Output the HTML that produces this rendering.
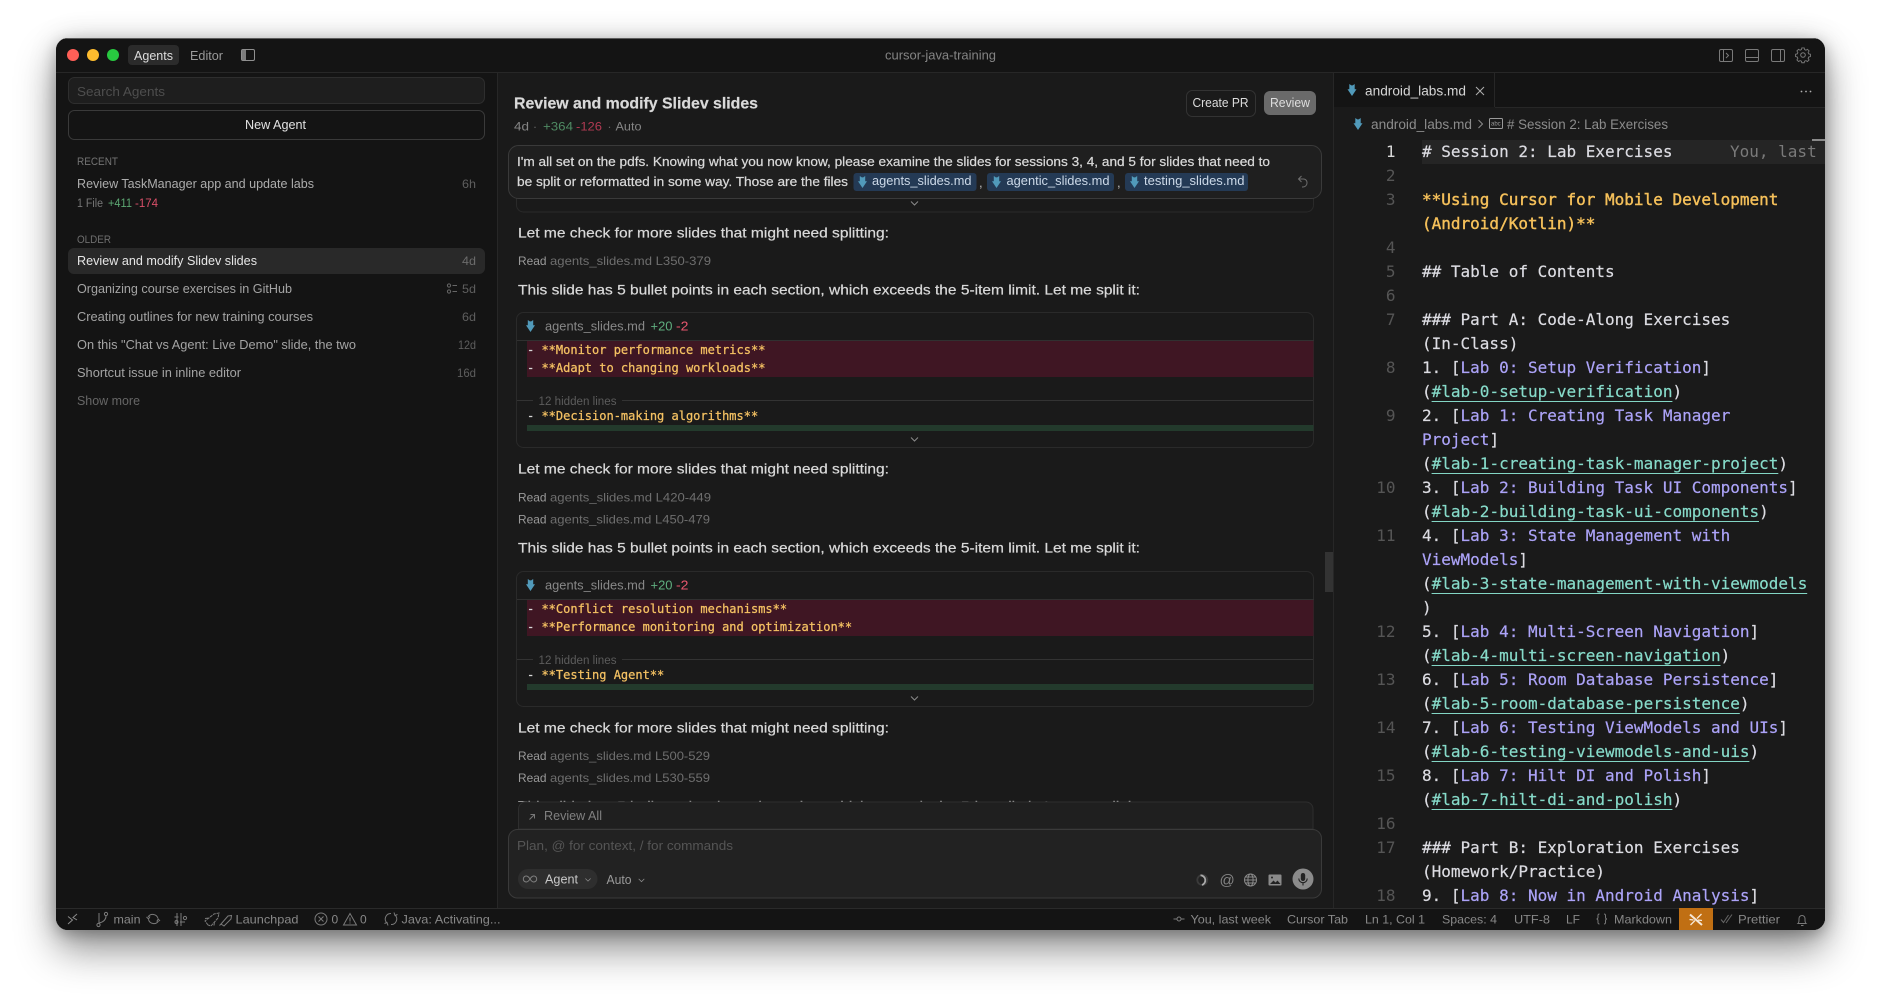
<!DOCTYPE html>
<html lang="en"><head><meta charset="utf-8"><title>cursor-java-training</title>
<style>
html,body{margin:0;padding:0;background:#fff;width:1881px;height:1004px;overflow:hidden}
#win{position:absolute;left:56px;top:38px;width:1769px;height:892px;border-radius:12px;background:#141414;box-shadow:0 20px 40px rgba(0,0,0,.42),0 4px 14px rgba(0,0,0,.22),0 0 30px rgba(0,0,0,.12)}
svg{position:absolute;left:0;top:0;filter:blur(.3px)}
text{font-family:"Liberation Sans",sans-serif;font-size:13px;white-space:pre}
.m{font-family:"DejaVu Sans Mono",monospace;font-size:12px;fill:#f5c263;stroke:#f5c263;stroke-width:.25}
.d{fill:#d8d8d8;stroke:#d8d8d8}
.c{font-family:"DejaVu Sans Mono",monospace;font-size:16px;fill:#dcdce2;stroke:#dcdce2;stroke-width:.2}
.n{font-family:"DejaVu Sans Mono",monospace;font-size:16px;fill:#555;text-anchor:end}
.y{fill:#f5c05a;stroke:#f5c05a;stroke-width:.4}.p{fill:#aca3f8;stroke:#aca3f8}.t{fill:#86dac9;stroke:#86dac9}
.s{font-size:12px;fill:#888}
.h{stroke:#d9d9d9;stroke-width:.22}
.i{fill:none;stroke:#7a7a7a;stroke-width:1}
</style></head><body>
<div id="win"></div>
<svg width="1881" height="1004" viewBox="0 0 1881 1004" xmlns="http://www.w3.org/2000/svg">
<defs>
<clipPath id="w"><rect x="56" y="38" width="1769" height="892" rx="12"/></clipPath>
<clipPath id="chat"><rect x="497" y="72" width="836" height="730"/></clipPath>
<symbol id="md" viewBox="0 0 9 12" overflow="visible"><path d="M1.8 0l2 1.4h1.4L7.2 0v5.2H9L4.5 12 0 5.2h1.8z" fill="#519aba"/></symbol>
<symbol id="chev" viewBox="0 0 8 5" overflow="visible"><path d="M.5.5L4 4 7.5.5" fill="none" stroke="#8a8a8a" stroke-width="1"/></symbol>
</defs>
<g clip-path="url(#w)">
<!-- base panels -->
<rect x="56" y="38" width="1769" height="892" fill="#141414"/>
<rect x="56" y="38" width="1769" height="1" fill="#5c5c5c"/>
<rect x="497" y="73" width="836" height="835" fill="#1a1a1a"/>
<rect x="1333" y="107" width="492" height="801" fill="#1a1a1a"/>
<rect x="56" y="72" width="1769" height="1" fill="#272727"/>
<rect x="497" y="72" width="1" height="836" fill="#272727"/>
<rect x="1333" y="72" width="1" height="836" fill="#272727"/>
<rect x="1495" y="107" width="330" height="1" fill="#272727"/>
<rect x="1494" y="73" width="1" height="34" fill="#272727"/>
<rect x="56" y="908" width="1769" height="1" fill="#2a2a2a"/>

<!-- title bar -->
<circle cx="73" cy="55" r="6" fill="#ff5f57"/><circle cx="93" cy="55" r="6" fill="#febc2e"/><circle cx="113" cy="55" r="6" fill="#28c840"/>
<rect x="128" y="45" width="51" height="20" rx="4" fill="#2b2b2b"/>
<text x="134" y="60" textLength="39" lengthAdjust="spacingAndGlyphs" fill="#dcdcdc">Agents</text>
<text x="190" y="60" textLength="33" lengthAdjust="spacingAndGlyphs" fill="#9a9a9a">Editor</text>
<rect x="241.5" y="49.5" width="13" height="11" rx="1.5" fill="none" stroke="#909090"/><rect x="242" y="50" width="4" height="10" fill="#7c7c7c"/>
<text x="885" y="59.5" textLength="111" lengthAdjust="spacingAndGlyphs" fill="#848484">cursor-java-training</text>
<g class="i">
<rect x="1719.5" y="49.5" width="13" height="12" rx="1.5"/><path d="M1723.5 50v11M1726 53l2.5 2.5-2.5 2.5"/>
<rect x="1745.5" y="49.5" width="13" height="12" rx="1.5"/><path d="M1746 57.5h12"/>
<rect x="1771.5" y="49.5" width="13" height="12" rx="1.5"/><path d="M1780.5 50v11"/>
<circle cx="1803" cy="55" r="2.3"/><path d="M1801.7 48.7h2.6l.4 1.8 1.5.7 1.6-1 1.8 1.8-1 1.6.6 1.5 1.9.5v2.5l-1.9.5-.6 1.5 1 1.6-1.8 1.8-1.6-1-1.5.6-.4 1.7h-2.6l-.4-1.7-1.5-.6-1.6 1-1.8-1.8 1-1.6-.6-1.5-1.9-.5v-2.5l1.9-.5.6-1.5-1-1.6 1.8-1.8 1.6 1 1.5-.7z" transform="translate(1803 55) scale(.92) translate(-1803 -56.4)"/>
</g>

<!-- sidebar -->
<rect x="68.5" y="77.5" width="416" height="26" rx="6" fill="#1e1e1e" stroke="#2e2e2e"/>
<text x="77" y="96" textLength="88" lengthAdjust="spacingAndGlyphs" fill="#4e4e4e">Search Agents</text>
<rect x="68.5" y="110.5" width="416" height="29" rx="6" fill="#141414" stroke="#3a3a3a"/>
<text x="245" y="129" textLength="61" lengthAdjust="spacingAndGlyphs" fill="#e2e2e2">New Agent</text>
<text x="77" y="165" textLength="41" lengthAdjust="spacingAndGlyphs" style="font-size:11px" fill="#737373">RECENT</text>
<text x="77" y="188" textLength="237" lengthAdjust="spacingAndGlyphs" fill="#adadad">Review TaskManager app and update labs</text>
<text x="462" y="188" textLength="14" lengthAdjust="spacingAndGlyphs" style="font-size:12px" fill="#5e5e5e">6h</text>
<text x="77" y="207" textLength="26" lengthAdjust="spacingAndGlyphs" style="font-size:11.5px" fill="#777">1 File</text>
<text x="108" y="207" textLength="24" lengthAdjust="spacingAndGlyphs" style="font-size:11.5px" fill="#5da873">+411</text>
<text x="135" y="207" textLength="23" lengthAdjust="spacingAndGlyphs" style="font-size:11.5px" fill="#d94f68">-174</text>
<text x="77" y="243" textLength="34" lengthAdjust="spacingAndGlyphs" style="font-size:11px" fill="#6e6e6e">OLDER</text>
<rect x="68" y="248" width="417" height="26" rx="6" fill="#292929"/>
<text x="77" y="265" textLength="180" lengthAdjust="spacingAndGlyphs" fill="#e6e6e6">Review and modify Slidev slides</text>
<text x="462" y="265" textLength="14" lengthAdjust="spacingAndGlyphs" style="font-size:12px" fill="#6c6c6c">4d</text>
<text x="77" y="293" textLength="215" lengthAdjust="spacingAndGlyphs" fill="#a4a4a4">Organizing course exercises in GitHub</text>
<circle cx="449" cy="285.5" r="1.6" class="i" style="stroke:#666"/><circle cx="449" cy="291.5" r="1.6" class="i" style="stroke:#666"/><path d="M452.5 285.5h4.5M452.5 291.5h4.5" class="i" style="stroke:#666"/>
<text x="462" y="293" textLength="14" lengthAdjust="spacingAndGlyphs" style="font-size:12px" fill="#5e5e5e">5d</text>
<text x="77" y="321" textLength="236" lengthAdjust="spacingAndGlyphs" fill="#a4a4a4">Creating outlines for new training courses</text>
<text x="462" y="321" textLength="14" lengthAdjust="spacingAndGlyphs" style="font-size:12px" fill="#5e5e5e">6d</text>
<text x="77" y="349" textLength="279" lengthAdjust="spacingAndGlyphs" fill="#a4a4a4">On this "Chat vs Agent: Live Demo" slide, the two</text>
<text x="458" y="349" textLength="18" lengthAdjust="spacingAndGlyphs" style="font-size:12px" fill="#5e5e5e">12d</text>
<text x="77" y="377" textLength="164" lengthAdjust="spacingAndGlyphs" fill="#a4a4a4">Shortcut issue in inline editor</text>
<text x="457" y="377" textLength="19" lengthAdjust="spacingAndGlyphs" style="font-size:12px" fill="#5e5e5e">16d</text>
<text x="77" y="405" textLength="63" lengthAdjust="spacingAndGlyphs" fill="#666">Show more</text>

<!-- chat body -->
<g clip-path="url(#chat)">
<rect x="516.5" y="190" width="797" height="22" rx="7" fill="#1a1a1a" stroke="#2a2a2a"/>
<use href="#chev" x="910.5" y="201" width="8" height="5"/>
<text class="h" x="518" y="237.700" textLength="371" lengthAdjust="spacingAndGlyphs" style="font-size:14px" fill="#d9d9d9">Let me check for more slides that might need splitting:</text>
<text x="518" y="265.200" textLength="28.5" lengthAdjust="spacingAndGlyphs" style="font-size:12px" fill="#9a9a9a">Read</text>
<text x="550" y="265.200" textLength="161" lengthAdjust="spacingAndGlyphs" style="font-size:12px" fill="#6e6e6e">agents_slides.md L350-379</text>
<text class="h" x="518" y="294.600" textLength="622" lengthAdjust="spacingAndGlyphs" style="font-size:14px" fill="#d9d9d9">This slide has 5 bullet points in each section, which exceeds the 5-item limit. Let me split it:</text>

<!-- diff card 1 -->
<g id="card1">
<rect x="516.5" y="312.5" width="797" height="135" rx="7" fill="#1a1a1a" stroke="#2a2a2a"/>
<rect x="517" y="340" width="797" height="1" fill="#303030"/>
<use href="#md" x="526" y="320" width="9" height="12"/>
<text x="545" y="330.5" textLength="100" lengthAdjust="spacingAndGlyphs" style="font-size:12.5px" fill="#888">agents_slides.md</text>
<text x="650.5" y="330.5" textLength="22" lengthAdjust="spacingAndGlyphs" style="font-size:12.5px" fill="#5fae7f">+20</text>
<text x="676" y="330.5" textLength="12.5" lengthAdjust="spacingAndGlyphs" style="font-size:12.5px" fill="#e8576f">-2</text>
<rect x="527" y="341" width="786.5" height="36" fill="#3f1623"/>
<text class="m" x="527" y="354"><tspan class="d">- </tspan>**Monitor performance metrics**</text>
<text class="m" x="527" y="372"><tspan class="d">- </tspan>**Adapt to changing workloads**</text>
<path d="M517 400.5h16M622 400.5h691" stroke="#333"/>
<text x="538.5" y="405" textLength="78" lengthAdjust="spacingAndGlyphs" style="font-size:11.5px" fill="#5c5c5c">12 hidden lines</text>
<text class="m" x="527" y="420"><tspan class="d">- </tspan>**Decision-making algorithms**</text>
<rect x="527" y="425" width="786.5" height="6" fill="#233a2c"/>
<use href="#chev" x="910.5" y="437" width="8" height="5"/>
</g>

<text class="h" x="518" y="473.700" textLength="371" lengthAdjust="spacingAndGlyphs" style="font-size:14px" fill="#d9d9d9">Let me check for more slides that might need splitting:</text>
<text x="518" y="501.700" textLength="28.5" lengthAdjust="spacingAndGlyphs" style="font-size:12px" fill="#9a9a9a">Read</text>
<text x="550" y="501.700" textLength="161" lengthAdjust="spacingAndGlyphs" style="font-size:12px" fill="#6e6e6e">agents_slides.md L420-449</text>
<text x="518" y="523.700" textLength="28.5" lengthAdjust="spacingAndGlyphs" style="font-size:12px" fill="#9a9a9a">Read</text>
<text x="550" y="523.700" textLength="160" lengthAdjust="spacingAndGlyphs" style="font-size:12px" fill="#6e6e6e">agents_slides.md L450-479</text>
<text class="h" x="518" y="552.600" textLength="622" lengthAdjust="spacingAndGlyphs" style="font-size:14px" fill="#d9d9d9">This slide has 5 bullet points in each section, which exceeds the 5-item limit. Let me split it:</text>

<!-- diff card 2 -->
<g transform="translate(0 259)">
<rect x="516.5" y="312.5" width="797" height="135" rx="7" fill="#1a1a1a" stroke="#2a2a2a"/>
<rect x="517" y="340" width="797" height="1" fill="#303030"/>
<use href="#md" x="526" y="320" width="9" height="12"/>
<text x="545" y="330.5" textLength="100" lengthAdjust="spacingAndGlyphs" style="font-size:12.5px" fill="#888">agents_slides.md</text>
<text x="650.5" y="330.5" textLength="22" lengthAdjust="spacingAndGlyphs" style="font-size:12.5px" fill="#5fae7f">+20</text>
<text x="676" y="330.5" textLength="12.5" lengthAdjust="spacingAndGlyphs" style="font-size:12.5px" fill="#e8576f">-2</text>
<rect x="527" y="341" width="786.5" height="36" fill="#3f1623"/>
<text class="m" x="527" y="354"><tspan class="d">- </tspan>**Conflict resolution mechanisms**</text>
<text class="m" x="527" y="372"><tspan class="d">- </tspan>**Performance monitoring and optimization**</text>
<path d="M517 400.5h16M622 400.5h691" stroke="#333"/>
<text x="538.5" y="405" textLength="78" lengthAdjust="spacingAndGlyphs" style="font-size:11.5px" fill="#5c5c5c">12 hidden lines</text>
<text class="m" x="527" y="420"><tspan class="d">- </tspan>**Testing Agent**</text>
<rect x="527" y="425" width="786.5" height="6" fill="#233a2c"/>
<use href="#chev" x="910.5" y="437" width="8" height="5"/>
</g>

<text class="h" x="518" y="732.700" textLength="371" lengthAdjust="spacingAndGlyphs" style="font-size:14px" fill="#d9d9d9">Let me check for more slides that might need splitting:</text>
<text x="518" y="760.200" textLength="28.5" lengthAdjust="spacingAndGlyphs" style="font-size:12px" fill="#9a9a9a">Read</text>
<text x="550" y="760.200" textLength="160" lengthAdjust="spacingAndGlyphs" style="font-size:12px" fill="#6e6e6e">agents_slides.md L500-529</text>
<text x="518" y="782.200" textLength="28.5" lengthAdjust="spacingAndGlyphs" style="font-size:12px" fill="#9a9a9a">Read</text>
<text x="550" y="782.200" textLength="160" lengthAdjust="spacingAndGlyphs" style="font-size:12px" fill="#6e6e6e">agents_slides.md L530-559</text>
<text class="h" x="518" y="811" textLength="622" lengthAdjust="spacingAndGlyphs" style="font-size:14px" fill="#d9d9d9">This slide has 5 bullet points in each section, which exceeds the 5-item limit. Let me split it:</text>
</g>

<!-- chat header over scroll -->
<rect x="498" y="73" width="835" height="72" fill="#1a1a1a"/>
<text class="h" x="514" y="108.5" textLength="244" lengthAdjust="spacingAndGlyphs" style="font-size:16px;font-weight:700" fill="#d9d9d9">Review and modify Slidev slides</text>
<text x="514" y="130.500" textLength="15" lengthAdjust="spacingAndGlyphs" style="font-size:12px" fill="#858585">4d</text>
<text x="533" y="130.500" style="font-size:12px" fill="#666">·</text>
<text x="543" y="130.500" textLength="30" lengthAdjust="spacingAndGlyphs" style="font-size:12px" fill="#4f8a63">+364</text>
<text x="576" y="130.500" textLength="26" lengthAdjust="spacingAndGlyphs" style="font-size:12px" fill="#b03a52">-126</text>
<text x="607.5" y="130.500" style="font-size:12px" fill="#666">·</text>
<text x="615.5" y="130.500" textLength="26" lengthAdjust="spacingAndGlyphs" style="font-size:12px" fill="#858585">Auto</text>
<rect x="1186.5" y="90.5" width="69" height="26" rx="6" fill="#1a1a1a" stroke="#333"/>
<text x="1192.5" y="107.200" textLength="56" lengthAdjust="spacingAndGlyphs" style="font-size:12.5px" fill="#dcdcdc">Create PR</text>
<rect x="1264" y="91" width="52" height="24" rx="6" fill="#6a6a6a"/>
<text x="1270" y="107.200" textLength="40" lengthAdjust="spacingAndGlyphs" style="font-size:12.5px" fill="#dedede">Review</text>

<!-- user message -->
<rect x="508.5" y="145.5" width="813" height="53" rx="10" fill="#1f1f1f" stroke="#3a3a3a"/>
<text class="h" x="517" y="166.2" textLength="753" lengthAdjust="spacingAndGlyphs" fill="#d9d9d9">I'm all set on the pdfs. Knowing what you now know, please examine the slides for sessions 3, 4, and 5 for slides that need to</text>
<text class="h" x="517" y="186" textLength="331" lengthAdjust="spacingAndGlyphs" fill="#d9d9d9">be split or reformatted in some way. Those are the files</text>
<rect x="853.5" y="173" width="123" height="18" rx="3" fill="#243a55"/>
<use href="#md" x="858" y="176" width="9" height="12"/>
<text x="872" y="185.2" textLength="99.5" lengthAdjust="spacingAndGlyphs" style="font-size:12.5px" fill="#ccd9e8">agents_slides.md</text>
<text x="979" y="187" fill="#bbb">,</text>
<rect x="987" y="173" width="127" height="18" rx="3" fill="#243a55"/>
<use href="#md" x="992" y="176" width="9" height="12"/>
<text x="1006.5" y="185.2" textLength="103" lengthAdjust="spacingAndGlyphs" style="font-size:12.5px" fill="#ccd9e8">agentic_slides.md</text>
<text x="1117" y="187" fill="#bbb">,</text>
<rect x="1125" y="173" width="123" height="18" rx="3" fill="#243a55"/>
<use href="#md" x="1130" y="176" width="9" height="12"/>
<text x="1144" y="185.2" textLength="100.5" lengthAdjust="spacingAndGlyphs" style="font-size:12.5px" fill="#ccd9e8">testing_slides.md</text>
<path d="M1301.5 176l-3 3 3 3M1298.5 179h5a3.500 3.500 0 0 1 3.500 3.500v.5a4 4 0 0 1-4 4h-1" fill="none" stroke="#6e6e6e"/>

<!-- scrollbar -->
<rect x="1325" y="552" width="8" height="40" fill="#333"/>

<!-- review all + input -->
<path d="M518.5 829V809a7 7 0 0 1 7-7H1306a7 7 0 0 1 7 7V829z" fill="#1f1f1f" stroke="#2e2e2e"/>
<path d="M529.5 819.5l5-5M530.5 814.5h4v4" fill="none" stroke="#777"/>
<text x="544" y="820" textLength="58" lengthAdjust="spacingAndGlyphs" style="font-size:12.5px" fill="#808080">Review All</text>
<rect x="508.5" y="829.5" width="813" height="68.5" rx="9" fill="#222" stroke="#3a3a3a"/>
<text x="517" y="850" textLength="216" lengthAdjust="spacingAndGlyphs" style="font-size:12.5px" fill="#555">Plan, @ for context, / for commands</text>
<rect x="518" y="869" width="79.5" height="20" rx="10" fill="#2e2e2e"/>
<path d="M530 879c-1.4-2.2-2.4-3-3.7-3a3 3 0 0 0 0 6c1.3 0 2.3-.8 3.7-3zm0 0c1.4-2.2 2.4-3 3.7-3a3 3 0 0 1 0 6c-1.3 0-2.3-.8-3.7-3z" fill="none" stroke="#808080"/>
<text x="545" y="883.5" textLength="33" lengthAdjust="spacingAndGlyphs" fill="#c8c8c8">Agent</text>
<use href="#chev" x="585" y="878" width="6" height="4"/>
<text x="606.5" y="884" textLength="25" lengthAdjust="spacingAndGlyphs" fill="#9a9a9a">Auto</text>
<use href="#chev" x="638" y="878.5" width="7" height="4"/>
<circle cx="1202.300" cy="880" r="5" fill="none" stroke="#3a3a3a" stroke-width="1.8"/>
<path d="M1200.500 875.300a5 5 0 0 1 1.500 9.700" fill="none" stroke="#aaa" stroke-width="1.8"/>
<text x="1219.500" y="885" style="font-size:15px" fill="#858585">@</text>
<g class="i" style="stroke:#8a8a8a"><circle cx="1250.5" cy="880" r="6"/><ellipse cx="1250.5" cy="880" rx="2.6" ry="6"/><path d="M1244.5 880h12M1245.5 877h10M1245.5 883h10"/></g>
<rect x="1268.5" y="874.5" width="13" height="11" rx="1" fill="#8a8a8a"/><path d="M1270 884l3.5-3.5 2 2 2-2 3 3.5z" fill="#222"/><circle cx="1272" cy="877.5" r="1" fill="#222"/>
<ellipse cx="1303" cy="879" rx="10.5" ry="10.5" fill="#8b8b8b"/>
<rect x="1300.8" y="873" width="4.4" height="8" rx="2.2" fill="#222"/><path d="M1298.8 878.5a4.2 4.2 0 0 0 8.4 0M1303 882.8v2.7" fill="none" stroke="#222" stroke-width="1.1"/>

<!-- editor tabs -->
<use href="#md" x="1347.5" y="84" width="9" height="12"/>
<text x="1365" y="95.5" textLength="101" lengthAdjust="spacingAndGlyphs" style="font-size:13.5px" fill="#d6d6d6">android_labs.md</text>
<path d="M1476 87l8 8M1484 87l-8 8" stroke="#b0b0b0" fill="none"/>
<circle cx="1801.5" cy="91.5" r=".9" fill="#b0b0b0"/><circle cx="1806" cy="91.5" r=".9" fill="#b0b0b0"/><circle cx="1810.5" cy="91.5" r=".9" fill="#b0b0b0"/>
<use href="#md" x="1353.5" y="118" width="9" height="12"/>
<text x="1371" y="129" textLength="101" lengthAdjust="spacingAndGlyphs" style="font-size:13.5px" fill="#8c8c8c">android_labs.md</text>
<path d="M1478.5 120l4 4-4 4" fill="none" stroke="#8c8c8c"/>
<rect x="1489.5" y="118.5" width="13" height="10" rx="1" fill="none" stroke="#9a9a9a"/>
<text x="1491" y="125.5" style="font-size:6px" fill="#9a9a9a">abc</text>
<text x="1507" y="129" textLength="161" lengthAdjust="spacingAndGlyphs" style="font-size:13.5px" fill="#8c8c8c"># Session 2: Lab Exercises</text>

<!-- editor -->
<rect x="1422" y="140" width="403" height="24" fill="#252525"/>
<rect x="1812" y="139" width="13" height="2" fill="#8a8a8a"/>
<text class="n" x="1395.5" y="157" style="fill:#d8d8d8">1</text>
<text class="c" x="1422" y="157"># Session 2: Lab Exercises</text>
<text class="c" x="1730" y="157" style="fill:#7a7a7a;stroke:none">You, last</text>
<text class="n" x="1395.5" y="181">2</text>
<text class="n" x="1395.5" y="205">3</text>
<text class="c y" x="1422" y="205">**Using Cursor for Mobile Development</text>
<text class="c y" x="1422" y="229">(Android/Kotlin)**</text>
<text class="n" x="1395.5" y="253">4</text>
<text class="n" x="1395.5" y="277">5</text>
<text class="c" x="1422" y="277">## Table of Contents</text>
<text class="n" x="1395.5" y="301">6</text>
<text class="n" x="1395.5" y="325">7</text>
<text class="c" x="1422" y="325">### Part A: Code-Along Exercises</text>
<text class="c" x="1422" y="349">(In-Class)</text>
<text class="n" x="1395.5" y="373">8</text>
<text class="c" x="1422" y="373">1. [<tspan class="p">Lab 0: Setup Verification</tspan>]</text>
<text class="c" x="1422" y="397">(<tspan class="t">#lab-0-setup-verification</tspan>)</text>
<rect x="1431.6" y="401" width="240.8" height="1" fill="#83d6c5"/>
<text class="n" x="1395.5" y="421">9</text>
<text class="c" x="1422" y="421">2. [<tspan class="p">Lab 1: Creating Task Manager</tspan></text>
<text class="c" x="1422" y="445"><tspan class="p">Project</tspan>]</text>
<text class="c" x="1422" y="469">(<tspan class="t">#lab-1-creating-task-manager-project</tspan>)</text>
<rect x="1431.6" y="473" width="346.7" height="1" fill="#83d6c5"/>
<text class="n" x="1395.5" y="493">10</text>
<text class="c" x="1422" y="493">3. [<tspan class="p">Lab 2: Building Task UI Components</tspan>]</text>
<text class="c" x="1422" y="517">(<tspan class="t">#lab-2-building-task-ui-components</tspan>)</text>
<rect x="1431.6" y="521" width="327.4" height="1" fill="#83d6c5"/>
<text class="n" x="1395.5" y="541">11</text>
<text class="c" x="1422" y="541">4. [<tspan class="p">Lab 3: State Management with</tspan></text>
<text class="c" x="1422" y="565"><tspan class="p">ViewModels</tspan>]</text>
<text class="c" x="1422" y="589">(<tspan class="t">#lab-3-state-management-with-viewmodels</tspan></text>
<rect x="1431.6" y="593" width="375.6" height="1" fill="#83d6c5"/>
<text class="c" x="1422" y="613">)</text>
<text class="n" x="1395.5" y="637">12</text>
<text class="c" x="1422" y="637">5. [<tspan class="p">Lab 4: Multi-Screen Navigation</tspan>]</text>
<text class="c" x="1422" y="661">(<tspan class="t">#lab-4-multi-screen-navigation</tspan>)</text>
<rect x="1431.6" y="665" width="288.9" height="1" fill="#83d6c5"/>
<text class="n" x="1395.5" y="685">13</text>
<text class="c" x="1422" y="685">6. [<tspan class="p">Lab 5: Room Database Persistence</tspan>]</text>
<text class="c" x="1422" y="709">(<tspan class="t">#lab-5-room-database-persistence</tspan>)</text>
<rect x="1431.6" y="713" width="308.2" height="1" fill="#83d6c5"/>
<text class="n" x="1395.5" y="733">14</text>
<text class="c" x="1422" y="733">7. [<tspan class="p">Lab 6: Testing ViewModels and UIs</tspan>]</text>
<text class="c" x="1422" y="757">(<tspan class="t">#lab-6-testing-viewmodels-and-uis</tspan>)</text>
<rect x="1431.6" y="761" width="317.8" height="1" fill="#83d6c5"/>
<text class="n" x="1395.5" y="781">15</text>
<text class="c" x="1422" y="781">8. [<tspan class="p">Lab 7: Hilt DI and Polish</tspan>]</text>
<text class="c" x="1422" y="805">(<tspan class="t">#lab-7-hilt-di-and-polish</tspan>)</text>
<rect x="1431.6" y="809" width="240.8" height="1" fill="#83d6c5"/>
<text class="n" x="1395.5" y="829">16</text>
<text class="n" x="1395.5" y="853">17</text>
<text class="c" x="1422" y="853">### Part B: Exploration Exercises</text>
<text class="c" x="1422" y="877">(Homework/Practice)</text>
<text class="n" x="1395.5" y="901">18</text>
<text class="c" x="1422" y="901">9. [<tspan class="p">Lab 8: Now in Android Analysis</tspan>]</text>

<!-- status bar -->
<rect x="56" y="909" width="1769" height="21" fill="#141414"/>
<g class="i">
<path d="M68 916.500l4.500 3.500-4.500 4M77 914l-4 3.500 4 2.500" stroke="#8a8a8a"/>
<circle cx="98.5" cy="925" r="1.6"/><circle cx="106" cy="914" r="1.6"/><path d="M99 923V913M106 916c0 4-3 6-6.5 7"/>
<path d="M148 917a5.5 5.5 0 0 1 10 1.5M158.500 921a5.500 5.500 0 0 1-10-1.500M146.500 917l2 2 1.500-2.500M160 921l-1.800-1.800-1.500 2.300"/>
<path d="M177 913v13M181 913v13M174.500 917h4M180 922h5"/><circle cx="185" cy="918" r="1.600"/><circle cx="176.500" cy="922" r="1.500"/>
<path d="M208 925l-3-4 9-7 5-1-1 5-7 8zM205 918.500l4-.5M214 925.500l.5-4" stroke-dasharray="3 .8"/>
<path d="M221 924l7-8 3.500-.5-.5 3.500-7 7zM221 924l-1.500 1.500"/>
<circle cx="321" cy="919" r="6"/><path d="M318.500 916.500l5 5M323.500 916.500l-5 5"/>
<path d="M350 913.500l6.500 11.500h-13zM350 917.500v4M350 922.500v1"/>
<path d="M391 913.500a5.500 5.500 0 0 0-4 9.500M391 924.500a5.500 5.500 0 0 0 4-9.500M388 925.500l-1-3-2.500 1M394 912.500l1 3 2.500-1"/>
<circle cx="1179" cy="919" r="2"/><path d="M1173.500 919h3.500M1181 919h3.500"/>
<path d="M1603.500 914c-2 0-1.500 2-1.500 3s-.5 2-1.500 2c1 0 1.500 1 1.500 2s-.5 3 1.500 3M1608 914c2 0 1.500 2 1.500 3s.5 2 1.500 2c-1 0-1.500 1-1.500 2s.5 3-1.500 3" transform="translate(-4 0)"/>
<path d="M1721 919.500l2.500 3 5-7.500M1726 923l6-8.500" stroke="#666"/>
<path d="M1798 923.500c1.200-1 1-3 1-5a3 3 0 0 1 6 0c0 2-.2 4 1 5zM1801 925.500h2.500"/>
</g>
<text class="s" x="113.500" y="923.500" textLength="27" lengthAdjust="spacingAndGlyphs">main</text>
<text class="s" x="235.500" y="923.500" textLength="63" lengthAdjust="spacingAndGlyphs">Launchpad</text>
<text class="s" x="331.500" y="923.500">0</text>
<text class="s" x="360" y="923.500">0</text>
<text class="s" x="401.500" y="923.500" textLength="99" lengthAdjust="spacingAndGlyphs">Java: Activating...</text>
<text class="s" x="1190.500" y="923.500" textLength="80.500" lengthAdjust="spacingAndGlyphs">You, last week</text>
<text class="s" x="1287" y="923.500" textLength="61" lengthAdjust="spacingAndGlyphs">Cursor Tab</text>
<text class="s" x="1365" y="923.500" textLength="60" lengthAdjust="spacingAndGlyphs">Ln 1, Col 1</text>
<text class="s" x="1442" y="923.500" textLength="55" lengthAdjust="spacingAndGlyphs">Spaces: 4</text>
<text class="s" x="1514" y="923.500" textLength="36" lengthAdjust="spacingAndGlyphs">UTF-8</text>
<text class="s" x="1566" y="923.500" textLength="14" lengthAdjust="spacingAndGlyphs">LF</text>
<text class="s" x="1614" y="923.500" textLength="58" lengthAdjust="spacingAndGlyphs">Markdown</text>
<rect x="1679" y="908" width="34" height="22" fill="#c06f13"/>
<path d="M1690 914.500l12 10.500" stroke="#f6e8d8" stroke-width="2" fill="none"/>
<path d="M1701.500 914l-4.500 4.500M1695 920.500l-4.500 4.500M1689.500 919.500l4 .5M1698 920l4 .5" stroke="#f6e8d8" stroke-width="1.300" fill="none"/>
<text class="s" x="1738" y="923.500" textLength="42" lengthAdjust="spacingAndGlyphs">Prettier</text>
</g>
</svg>
</body></html>
